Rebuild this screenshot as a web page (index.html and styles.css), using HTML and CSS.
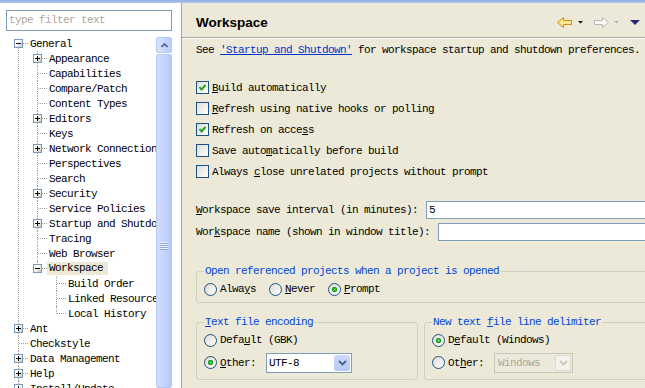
FILE: index.html
```html
<!DOCTYPE html>
<html lang="en">
<head>
  <meta charset="UTF-8">
  <title>Preferences - Workspace</title>
  <link rel="stylesheet" href="styles.css">
</head>
<body>
  <div class="window">
    <div class="titlebar"></div>
    <div class="main">

      <!-- left: filter + preference tree -->
      <div class="nav">
        <div class="filter">type filter text</div>
        <div class="nav-body">
          <div class="tree-view">
            <ul class="tree">
              <li class="first"><span class="tog open"></span><div class="lbl">General</div>
                <ul>
                  <li><span class="tog"></span><div class="lbl">Appearance</div></li>
                  <li><div class="lbl">Capabilities</div></li>
                  <li><div class="lbl">Compare/Patch</div></li>
                  <li><div class="lbl">Content Types</div></li>
                  <li><span class="tog"></span><div class="lbl">Editors</div></li>
                  <li><div class="lbl">Keys</div></li>
                  <li><span class="tog"></span><div class="lbl">Network Connections</div></li>
                  <li><div class="lbl">Perspectives</div></li>
                  <li><div class="lbl">Search</div></li>
                  <li><span class="tog"></span><div class="lbl">Security</div></li>
                  <li><div class="lbl">Service Policies</div></li>
                  <li><span class="tog"></span><div class="lbl">Startup and Shutdown</div></li>
                  <li><div class="lbl">Tracing</div></li>
                  <li><div class="lbl">Web Browser</div></li>
                  <li class="last"><span class="tog open"></span><div class="lbl"><span class="sel">Workspace</span></div>
                    <ul>
                      <li><div class="lbl">Build Order</div></li>
                      <li><div class="lbl">Linked Resources</div></li>
                      <li class="last"><div class="lbl">Local History</div></li>
                    </ul>
                  </li>
                </ul>
              </li>
              <li><span class="tog"></span><div class="lbl">Ant</div></li>
              <li><div class="lbl">Checkstyle</div></li>
              <li><span class="tog"></span><div class="lbl">Data Management</div></li>
              <li><span class="tog"></span><div class="lbl">Help</div></li>
              <li><span class="tog"></span><div class="lbl">Install/Update</div></li>
              <li><span class="tog"></span><div class="lbl">Java</div></li>
            </ul>
          </div>
          <div class="vscroll">
            <div class="vscroll-btn">
              <svg width="7" height="5" viewBox="0 0 7 5"><polyline points="0.5,4 3.5,1 6.5,4" fill="none" stroke="#4d6185" stroke-width="1.6"/></svg>
            </div>
            <div class="vscroll-thumb"></div>
          </div>
        </div>
      </div>

      <!-- right: preference page -->
      <div class="page">
        <div class="page-head">
          <h1>Workspace</h1>
          <svg class="nav-tools" width="84" height="13" viewBox="0 0 84 13">
            <polygon points="1.5,6.5 7.5,1.5 7.5,4.5 15.5,4.5 15.5,8.5 7.5,8.5 7.5,11.5" fill="#fde790" stroke="#d48c0c"/>
            <polygon points="22,5 27,5 24.5,7.5" fill="#000"/>
            <polygon points="52.5,6.5 46.5,1.5 46.5,4.5 38.5,4.5 38.5,8.5 46.5,8.5 46.5,11.5" fill="#f8f8f6" stroke="#b8b8b4"/>
            <polygon points="58,5 63,5 60.5,7.5" fill="#b4b4b0"/>
            <polygon points="74,4 84,4 79,9" fill="#2a2a70"/>
          </svg>
        </div>

        <div class="page-body">
          <p class="lead">See <a href="#">'Startup and Shutdown'</a> for workspace startup and shutdown preferences.</p>

          <div class="checks">
            <div class="check"><span class="box"><svg width="11" height="11" viewBox="0 0 11 11"><polyline points="2.5,5 4.5,7.5 8.5,3" fill="none" stroke="#21a121" stroke-width="2"/></svg></span><span><u>B</u>uild automatically</span></div>
            <div class="check"><span class="box"></span><span><u>R</u>efresh using native hooks or polling</span></div>
            <div class="check"><span class="box"><svg width="11" height="11" viewBox="0 0 11 11"><polyline points="2.5,5 4.5,7.5 8.5,3" fill="none" stroke="#21a121" stroke-width="2"/></svg></span><span>Refresh on acce<u>s</u>s</span></div>
            <div class="check"><span class="box"></span><span>Save auto<u>m</u>atically before build</span></div>
            <div class="check"><span class="box"></span><span>Always <u>c</u>lose unrelated projects without prompt</span></div>
          </div>

          <div class="fields">
            <div class="field"><span><u>W</u>orkspace save interval (in minutes):</span><div class="input">5</div></div>
            <div class="field"><span>Wor<u>k</u>space name (shown in window title):</span><div class="input"></div></div>
          </div>

          <fieldset class="group">
            <legend>Open referenced projects when a project is opened</legend>
            <div class="opts">
              <div class="opt"><span class="radio"></span><span>Alwa<u>y</u>s</span></div>
              <div class="opt"><span class="radio"></span><span><u>N</u>ever</span></div>
              <div class="opt"><span class="radio on"></span><span><u>P</u>rompt</span></div>
            </div>
          </fieldset>

          <div class="groups">
            <fieldset class="group enc">
              <legend><u>T</u>ext file encoding</legend>
              <div class="row"><span class="radio"></span><span>Defa<u>u</u>lt (GBK)</span></div>
              <div class="row"><span class="radio on"></span><span><u>O</u>ther:</span>
                <div class="combo"><span>UTF-8</span><span class="drop"><svg width="9" height="6" viewBox="0 0 9 6"><polyline points="1,1 4.5,4.5 8,1" fill="none" stroke="#4d6185" stroke-width="1.8"/></svg></span></div>
              </div>
            </fieldset>
            <fieldset class="group delim">
              <legend>New text <u>f</u>ile line delimiter</legend>
              <div class="row"><span class="radio on"></span><span>D<u>e</u>fault (Windows)</span></div>
              <div class="row"><span class="radio"></span><span>Ot<u>h</u>er:</span>
                <div class="combo off"><span>Windows</span><span class="drop"><svg width="9" height="6" viewBox="0 0 9 6"><polyline points="1,1 4.5,4.5 8,1" fill="none" stroke="#c9c7ba" stroke-width="1.8"/></svg></span></div>
              </div>
            </fieldset>
          </div>
        </div>
      </div>

    </div>
  </div>
</body>
</html>
```

FILE: styles.css
```css
/* ---------- base ---------- */
* {
  box-sizing: border-box;
}
body {
  margin: 0;
  background: #ece9d8;
  color: #000;
  font-family: "Liberation Mono", "DejaVu Sans Mono", monospace;
  font-size: 11px;
  letter-spacing: -0.6px;
}
.window {
  width: 645px;
  height: 388px;
  overflow: hidden;
  display: flex;
  flex-direction: column;
}
.titlebar {
  height: 3px;
  background: linear-gradient(#8fade3, #b4c9ee);
}
.main {
  flex: 1;
  display: flex;
  min-height: 0;
}

/* ---------- left side: filter + tree ---------- */
.nav {
  width: 181px;
  background: #fff;
  padding-top: 7px;
  display: flex;
  flex-direction: column;
}
.filter {
  margin-left: 6px;
  width: 166px;
  height: 21px;
  border: 1px solid #7f9db9;
  padding-left: 2px;
  line-height: 19px;
  color: #aca899;
}
.nav-body {
  flex: 1;
  display: flex;
  margin-top: 5px;
  min-height: 0;
}
.tree-view {
  width: 156px;
  overflow: hidden;
}

.tree,
.tree ul {
  list-style: none;
  margin: 0;
  padding: 0;
}
.tree {
  padding-left: 18px;
}
.tree ul {
  padding-left: 7px;
}
.tree li {
  position: relative;
  padding-left: 12px;
}
/* dotted connector lines */
.tree li::before {
  content: "";
  position: absolute;
  left: 0;
  top: 0;
  bottom: 0;
  border-left: 1px dotted #a0a0a0;
}
.tree li.first::before {
  top: 7px;
}
.tree li.last::before {
  bottom: auto;
  height: 8px;
}
.tree li::after {
  content: "";
  position: absolute;
  left: 1px;
  top: 7px;
  width: 9px;
  border-top: 1px dotted #a0a0a0;
}
/* +/- expander box */
.tog {
  position: absolute;
  left: -4px;
  top: 3px;
  z-index: 1;
  width: 9px;
  height: 9px;
  border: 1px solid #7898b5;
  background:
    linear-gradient(#000, #000) center / 5px 1px no-repeat,
    linear-gradient(#000, #000) center / 1px 5px no-repeat,
    linear-gradient(135deg, #fff 35%, #c8c8bf);
}
.tog.open {
  background:
    linear-gradient(#000, #000) center / 5px 1px no-repeat,
    linear-gradient(135deg, #fff 35%, #c8c8bf);
}
.lbl {
  display: flex;
  align-items: center;
  height: 15px;
  white-space: nowrap;
}
.lbl .sel {
  line-height: 13px;
  margin-left: -2px;
  padding: 0 5px 0 2px;
  background: #ece9d8;
}

/* ---------- scrollbar ---------- */
.vscroll {
  width: 16px;
  padding-top: 1px;
  display: flex;
  flex-direction: column;
  gap: 1px;
}
.vscroll-btn {
  height: 16px;
  border: 1px solid #b5c9f3;
  border-radius: 2px;
  background: linear-gradient(90deg, #d6e2fd, #b9ccf7);
  display: flex;
  align-items: center;
  justify-content: center;
}
.vscroll-btn svg {
  display: block;
}
.vscroll-thumb {
  flex: 1;
  position: relative;
  border: 1px solid #b5c9f3;
  border-radius: 2px;
  background: linear-gradient(90deg, #d0ddfd, #bfd1fa 65%, #b5c9f5);
}
.vscroll-thumb::after {
  content: "";
  position: absolute;
  left: 3px;
  top: 187px;
  width: 8px;
  height: 8px;
  background: repeating-linear-gradient(#eef3ff 0 1px, #8ea8e2 1px 2px);
}

/* ---------- right side: page ---------- */
.page {
  flex: 1;
  min-width: 0;
  background: #ece9d8;
  border-left: 1px solid #aca899;
  overflow: hidden;
}
.page-head {
  height: 35px;
  display: flex;
  padding: 0 5px 0 14px;
  border-bottom: 1px solid #aca899;
  box-shadow: 0 1px 0 #fff;
}
.page-head h1 {
  margin: 0;
  padding-top: 12px;
  font-family: "Liberation Sans", Arial, sans-serif;
  font-size: 13.5px;
  font-weight: bold;
  letter-spacing: 0;
  line-height: 16px;
}
.nav-tools {
  display: block;
  margin-left: auto;
  margin-top: 13px;
}

.page-body {
  width: 470px;
  padding: 6px 0 0 14px;
}
.lead {
  margin: 0;
  line-height: 13px;
  white-space: nowrap;
}
.lead a {
  color: #0033cc;
}

.checks {
  margin-top: 20px;
}
.check {
  display: flex;
  align-items: center;
  height: 21px;
  white-space: nowrap;
}
.box {
  flex: none;
  width: 13px;
  height: 13px;
  margin-right: 3px;
  border: 1px solid #1c5180;
  background: linear-gradient(135deg, #dcdcd7, #fff);
}
.box svg {
  display: block;
}

.fields {
  margin-top: 18px;
  display: flex;
  flex-direction: column;
  gap: 2px;
}
.field {
  display: flex;
  align-items: center;
  height: 20px;
  white-space: nowrap;
}
.input {
  flex: 1;
  height: 18px;
  margin-left: 8px;
  padding-left: 2px;
  line-height: 16px;
  background: #fff;
  border: 1px solid #7f9db9;
}

/* ---------- group boxes ---------- */
.group {
  margin: 23px 0 0;
  min-width: 0;
  padding: 2px 8px 4px 7px;
  border: 1px solid #d0d0bf;
  border-radius: 3px;
}
.group legend {
  padding: 0 1px;
  line-height: 13px;
  color: #0046d5;
}
.opts {
  display: flex;
  align-items: center;
  gap: 13px;
  height: 18px;
}
.opt {
  display: flex;
  align-items: center;
  white-space: nowrap;
}
.radio {
  flex: none;
  width: 13px;
  height: 13px;
  margin-right: 3px;
  border: 1px solid #1c5180;
  border-radius: 50%;
  background: linear-gradient(135deg, #dcdcd7, #fff);
}
.radio.on {
  background:
    radial-gradient(circle, #6ade62 0, #21a121 2px, #21a121 2.5px, transparent 3px),
    linear-gradient(135deg, #dcdcd7, #fff);
}

.groups {
  display: flex;
  gap: 6px;
  margin-top: 13px;
}
.groups .group {
  margin: 0;
  padding-bottom: 6px;
}
.enc {
  flex: none;
  width: 222px;
}
.delim {
  flex: 1;
}
.group .row {
  display: flex;
  align-items: center;
  height: 18px;
  white-space: nowrap;
}
.group .row + .row {
  margin-top: 3px;
  height: 21px;
}

.combo {
  display: flex;
  width: 86px;
  height: 20px;
  margin-left: 10px;
  padding: 1px;
  border: 1px solid #7f9db9;
  background: #fff;
}
.combo span:first-child {
  flex: 1;
  padding-left: 1px;
  line-height: 16px;
}
.combo .drop {
  width: 16px;
  border-radius: 2px;
  background: linear-gradient(#cddbfc, #b4c8f6);
  display: flex;
  align-items: center;
  justify-content: center;
}
.combo.off {
  width: 79px;
  border-color: #c9c7ba;
  background: #ebe9dc;
  color: #aca899;
}
.combo.off span:first-child {
  padding-left: 2px;
}
.combo.off .drop {
  background: #f3f2ec;
  border: 1px solid #dedccf;
}
```
